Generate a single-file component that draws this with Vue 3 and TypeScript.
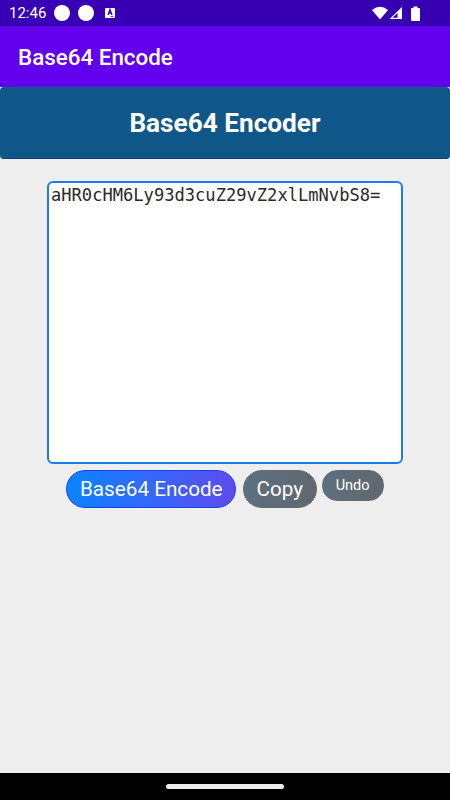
<script setup lang="ts">
import { ref } from 'vue'

const encoded = ref('aHR0cHM6Ly93d3cuZ29vZ2xlLmNvbS8=')
</script>

<template>
  <div class="phone">
    <!-- status bar -->
    <div class="status-bar">
      <span class="clock">12:46</span>
      <span class="dot"></span>
      <span class="dot"></span>
      <svg class="note-icon" width="12" height="12" viewBox="0 0 12 12">
        <rect x="1" y="1" width="10" height="10" rx="1" fill="#fff" />
        <path d="M4 8 L6 2.5 L8 8 M4.8 6 H7.2" fill="none" stroke="#3700b3" stroke-width="1.3" />
        <path d="M6.5 9.6 H9.5" stroke="#3700b3" stroke-width="0.8" />
      </svg>
      <span class="status-spacer"></span>
      <svg width="16" height="14" viewBox="0 0 16 14">
        <path d="M0 4 Q8 -2.5 16 4 L8 13.5 Z" fill="#fff" />
      </svg>
      <svg class="signal" width="14" height="14" viewBox="0 0 14 14">
        <path d="M0.5 13 L13 1 V13 Z" fill="#fff" />
        <path d="M3.5 11.8 L8.5 7 V11.8 Z" fill="#3700b3" />
      </svg>
      <svg class="battery" width="9" height="15" viewBox="0 0 9 15">
        <path d="M2.5 0.5 H6.5 V2 H8 Q9 2 9 3 V14 Q9 15 8 15 H1 Q0 15 0 14 V3 Q0 2 1 2 H2.5 Z" fill="#fff" />
      </svg>
    </div>

    <!-- action bar -->
    <div class="action-bar">Base64 Encode</div>

    <div class="content">
      <div class="banner">Base64 Encoder</div>

      <div class="editor">
        <textarea v-model="encoded" class="input" spellcheck="false"></textarea>
        <div class="buttons">
          <button class="btn btn-primary">Base64 Encode</button>
          <button class="btn btn-secondary">Copy</button>
          <button class="btn btn-secondary btn-small">Undo</button>
        </div>
      </div>
    </div>

    <!-- nav bar -->
    <div class="nav-bar">
      <span class="home-pill"></span>
    </div>
  </div>
</template>

<style>
html,
body {
  margin: 0;
  background: #000;
}
</style>

<style scoped>
.phone {
  width: 450px;
  height: 800px;
  display: flex;
  flex-direction: column;
  overflow: hidden;
  font-family: Roboto, "Liberation Sans", sans-serif;
}

.status-bar {
  height: 26px;
  flex: none;
  display: flex;
  align-items: center;
  padding: 0 30px 0 9px;
  background: #3700b3;
  color: #fff;
}

.clock {
  font-size: 15px;
  margin-right: 6px;
}

.dot {
  width: 16px;
  height: 16px;
  border-radius: 50%;
  background: #fff;
  margin-left: 2px;
  margin-right: 6px;
}

.note-icon {
  margin-left: 4px;
}

.status-spacer {
  flex: 1;
}

.signal {
  margin-left: 1px;
}

.battery {
  margin-left: 8px;
}

.action-bar {
  height: 61px;
  flex: none;
  display: flex;
  align-items: center;
  padding-left: 18px;
  background: #6200ee;
  color: #fff;
  font-size: 22.4px;
  font-weight: 500;
}

.content {
  flex: 1;
  background: #eeeeee;
}

.banner {
  height: 72px;
  display: flex;
  align-items: center;
  justify-content: center;
  box-sizing: border-box;
  background: #0f5788;
  border-bottom: 1px solid #0c3f78;
  border-radius: 4px;
  color: #fff;
  font-size: 26.2px;
  font-weight: 700;
}

.editor {
  display: flex;
  flex-direction: column;
  align-items: center;
  padding-top: 22px;
}

.input {
  display: block;
  width: 356px;
  height: 283px;
  box-sizing: border-box;
  margin: 0;
  padding: 2px;
  background: #fff;
  border: 2px solid #1a7cf0;
  border-radius: 6px;
  outline: none;
  resize: none;
  color: #2a2a2a;
  font-family: "DejaVu Sans Mono", monospace;
  font-size: 17.1px;
  line-height: 20px;
}

.buttons {
  display: flex;
  align-items: flex-start;
  margin-top: 6px;
}

.btn {
  height: 38px;
  box-sizing: border-box;
  padding: 0 12.5px;
  border: 1px solid #606a72;
  border-radius: 19px;
  color: #fff;
  font-family: inherit;
  font-size: 20.7px;
}

.btn-primary {
  margin-right: 7px;
  border-color: #1a3ff0;
  background: linear-gradient(90deg, #0a84ff, #5e4bee);
}

.btn-secondary {
  background: linear-gradient(100deg, #5c7080, #62676d);
}

.btn-small {
  height: 31px;
  margin-left: 5px;
  padding: 0 13px;
  border-radius: 15px;
  font-size: 14.5px;
}

.nav-bar {
  height: 27px;
  flex: none;
  display: flex;
  align-items: center;
  justify-content: center;
  background: #000;
}

.home-pill {
  width: 118px;
  height: 5px;
  border-radius: 3px;
  background: #eeeeee;
}
</style>
